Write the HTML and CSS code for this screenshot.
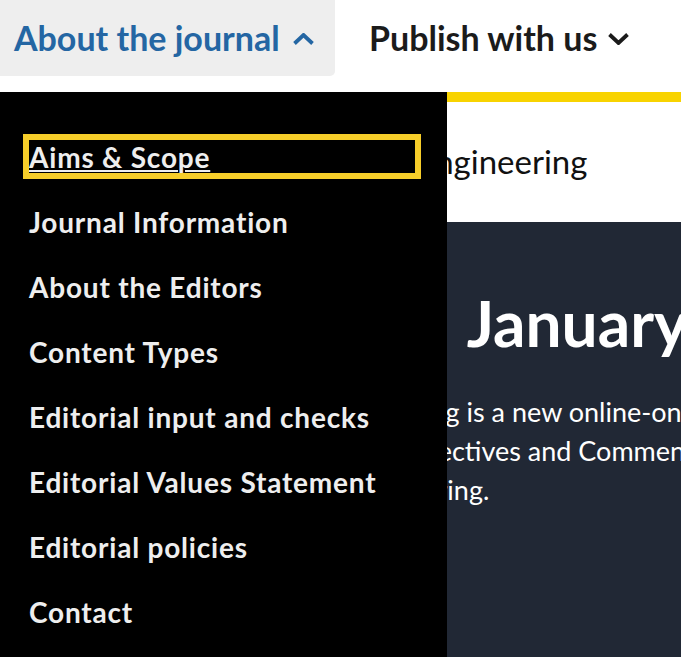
FILE: index.html
```html
<!DOCTYPE html>
<html lang="en">
<head>
<meta charset="utf-8">
<title>Communications Engineering</title>
<link rel="stylesheet" href="styles.css">
</head>
<body>
<header class="topnav">
  <div class="nav-item nav-item--open">
    <span>About the journal</span>
    <svg class="chevron" width="21" height="12" viewBox="0 0 21 12" aria-hidden="true"><polyline points="1.5,10.5 10.5,2 19.5,10.5" fill="none" stroke="currentColor" stroke-width="3.8"/></svg>
  </div>
  <div class="nav-item">
    <span>Publish with us</span>
    <svg class="chevron" width="21" height="12" viewBox="0 0 21 12" aria-hidden="true"><polyline points="1.5,1.5 10.5,10 19.5,1.5" fill="none" stroke="currentColor" stroke-width="3.8"/></svg>
  </div>
</header>
<main>
  <div class="brand-bar"></div>
  <section class="masthead">
    <p class="journal-title">Communications Engineering</p>
  </section>
  <section class="hero">
    <h1 class="hero-title">Launching in January 2022</h1>
    <p class="hero-text">
      <span class="line line-1">Communications Engineering is a new online-only, open access journal</span>
      <span class="line line-2">Articles, Reviews, Perspectives and Comments</span>
      <span class="line line-3">across all areas of engineering.</span>
    </p>
  </section>
</main>
<nav class="dropdown">
  <ul class="dropdown-list">
    <li><a class="dropdown-link is-focused" href="#">Aims &amp; Scope</a></li>
    <li><a class="dropdown-link" href="#">Journal Information</a></li>
    <li><a class="dropdown-link" href="#">About the Editors</a></li>
    <li><a class="dropdown-link" href="#">Content Types</a></li>
    <li><a class="dropdown-link" href="#">Editorial input and checks</a></li>
    <li><a class="dropdown-link" href="#">Editorial Values Statement</a></li>
    <li><a class="dropdown-link" href="#">Editorial policies</a></li>
    <li><a class="dropdown-link" href="#">Contact</a></li>
  </ul>
</nav>
</body>
</html>
```

FILE: styles.css
```css
* { box-sizing: border-box; }
html, body {
  margin: 0;
  padding: 0;
  height: 100%;
  overflow: hidden;
}
body {
  position: relative;
  background: #fff;
  font-family: Lato, "Open Sans", "Liberation Sans", sans-serif;
  color: #111;
}

/* top navigation */
.topnav {
  display: flex;
  align-items: flex-start;
  height: 92px;
  background: #fff;
}
.nav-item {
  display: flex;
  align-items: center;
  height: 76px;
  padding-top: 1px;
  font-size: 34px;
  font-weight: 700;
  line-height: 1.2;
  white-space: nowrap;
  color: #1b1b1b;
  padding-left: 34px;
  gap: 11px;
}
.nav-item--open {
  width: 335px;
  padding-left: 14px;
  gap: 13px;
  background: #eeeeee;
  border-bottom-right-radius: 5px;
  color: #2466a3;
}
.chevron { display: block; flex: none; }

/* page */
.brand-bar {
  height: 10px;
  background: #f8d300;
}
.masthead {
  height: 120px;
  padding-top: 40px;
}
.journal-title {
  margin: 0 0 0 165px;
  font-size: 33px;
  line-height: 1.2;
  white-space: nowrap;
  color: #111;
}
.hero {
  background: #212835;
  color: #fff;
  padding-top: 63px;
  height: 600px;
}
.hero-title {
  margin: 0 0 0 82px;
  font-size: 64px;
  font-weight: 700;
  line-height: 1.2;
  word-spacing: 6px;
  white-space: nowrap;
}
.hero-text {
  margin: 30px 0 0 0;
  font-size: 27px;
  line-height: 39px;
  white-space: nowrap;
}
.line { display: block; }
.line-1 { margin-left: 114px; }
.line-2 { margin-left: 158px; }
.line-3 { margin-left: 130px; }

/* dropdown menu */
.dropdown {
  position: absolute;
  top: 92px;
  left: 0;
  width: 447px;
  bottom: 0;
  background: #000;
  padding: 48px 32px 0 29px;
}
.dropdown-list {
  list-style: none;
  margin: 0;
  padding: 0;
  display: flex;
  flex-direction: column;
  gap: 32px;
}
.dropdown-link {
  display: block;
  height: 33px;
  padding-top: 1px;
  font-size: 28px;
  font-weight: 700;
  letter-spacing: 0.8px;
  line-height: 33px;
  color: #eeeeee;
  text-decoration: none;
  white-space: nowrap;
}
.dropdown-link.is-focused {
  text-decoration: underline;
  text-decoration-thickness: 2px;
  text-underline-offset: 2px;
  outline: 6px solid #f7ce2a;
}
```
